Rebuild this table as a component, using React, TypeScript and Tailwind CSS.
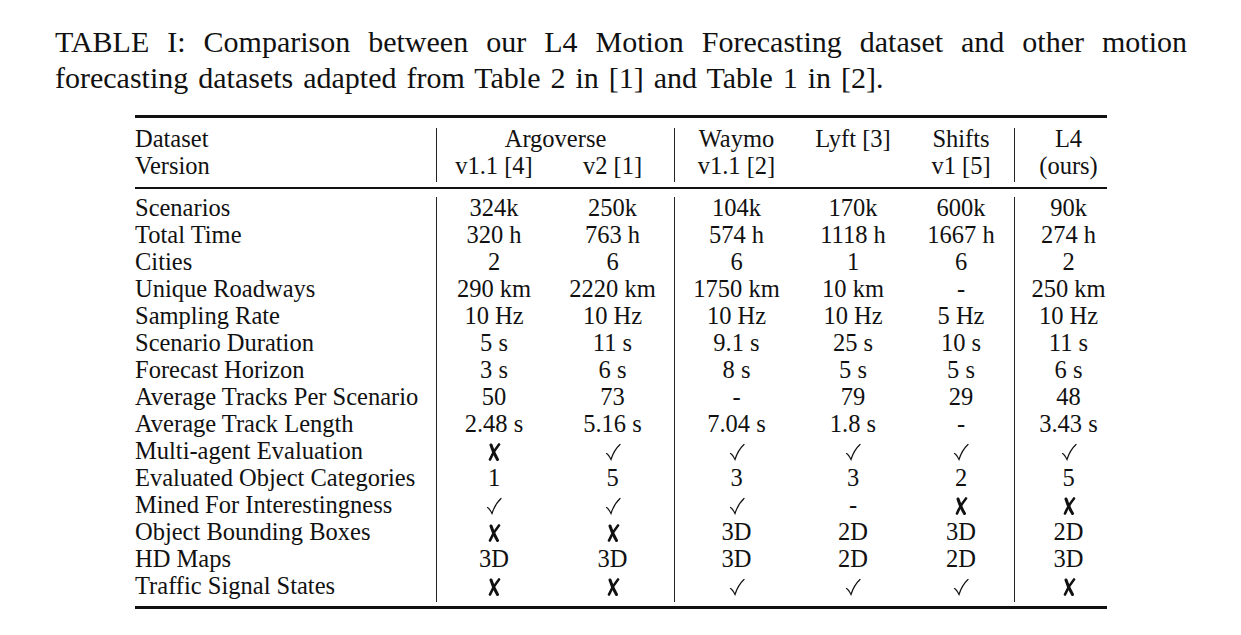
import React from "react";

const serif = { fontFamily: '"Liberation Serif", "Times New Roman", serif' };

const CHECK = "✓";
const CROSS = "✗";

const widths = ["w-[301px]", "w-[115px]", "w-[123px]", "w-[124px]", "w-[110px]", "w-[106px]", "w-[93px] pl-[15px]"];
const leftBorder = [false, true, false, true, false, false, true];

const rows: string[][] = [
  ["Scenarios", "324k", "250k", "104k", "170k", "600k", "90k"],
  ["Total Time", "320 h", "763 h", "574 h", "1118 h", "1667 h", "274 h"],
  ["Cities", "2", "6", "6", "1", "6", "2"],
  ["Unique Roadways", "290 km", "2220 km", "1750 km", "10 km", "-", "250 km"],
  ["Sampling Rate", "10 Hz", "10 Hz", "10 Hz", "10 Hz", "5 Hz", "10 Hz"],
  ["Scenario Duration", "5 s", "11 s", "9.1 s", "25 s", "10 s", "11 s"],
  ["Forecast Horizon", "3 s", "6 s", "8 s", "5 s", "5 s", "6 s"],
  ["Average Tracks Per Scenario", "50", "73", "-", "79", "29", "48"],
  ["Average Track Length", "2.48 s", "5.16 s", "7.04 s", "1.8 s", "-", "3.43 s"],
  ["Multi-agent Evaluation", CROSS, CHECK, CHECK, CHECK, CHECK, CHECK],
  ["Evaluated Object Categories", "1", "5", "3", "3", "2", "5"],
  ["Mined For Interestingness", CHECK, CHECK, CHECK, "-", CROSS, CROSS],
  ["Object Bounding Boxes", CROSS, CROSS, "3D", "2D", "3D", "2D"],
  ["HD Maps", "3D", "3D", "3D", "2D", "2D", "3D"],
  ["Traffic Signal States", CROSS, CROSS, CHECK, CHECK, CHECK, CROSS],
];

function Cell({ v }: { v: string }) {
  if (v === CHECK)
    return (
      <svg width="16" height="18" viewBox="0 0 16 18" className="inline-block mt-[3px]">
        <path d="M1.5 10.5 Q3.5 11.5 6 16.5 Q9 7 15 1.5" fill="none" stroke="#111" strokeWidth="1.2" strokeLinecap="round" />
      </svg>
    );
  if (v === CROSS)
    return (
      <svg width="14" height="18" viewBox="0 0 14 18" className="inline-block mt-[3px]">
        <path d="M4 2 Q6 9 10.5 16.5" fill="none" stroke="#111" strokeWidth="3" strokeLinecap="round" />
        <path d="M12 1.5 Q6.5 8 3 16.5" fill="none" stroke="#111" strokeWidth="2.6" strokeLinecap="round" />
      </svg>
    );
  return <>{v}</>;
}

function Row({ cells }: { cells: React.ReactNode[] }) {
  return (
    <div className="flex h-[27px] items-start leading-[21px]">
      {cells.map((c, i) => (
        <div
          key={i}
          className={`${widths[i]} h-full flex items-start whitespace-nowrap ${i === 0 ? "justify-start" : "justify-center"} ${leftBorder[i] ? "border-l border-[#222]" : ""}`}
        >
          {c}
        </div>
      ))}
    </div>
  );
}

export default function App() {
  return (
    <div className="w-[1241px] h-[635px] bg-white text-[#111] overflow-hidden" style={serif}>
      <div className="pl-[55px] pr-[54px] pt-[24px] text-[30px] leading-[36px] [word-spacing:2.5px]">
        <p className="text-justify [text-align-last:left]">
          TABLE I: Comparison between our L4 Motion Forecasting dataset and other motion forecasting datasets adapted from Table 2 in [1] and Table 1 in [2].
        </p>
      </div>
      <div className="ml-[135px] w-[972px] mt-[19px] text-[24.5px]">
        <div className="h-[3px] bg-[#111]" />
        <div className="pt-[10px] pb-[5px]">
          <div className="flex h-[27px] items-start leading-[21px]">
            <div className="w-[301px] h-full">Dataset</div>
            <div className="w-[238px] h-full flex justify-center border-l border-[#222]">Argoverse</div>
            <div className="w-[124px] h-full flex justify-center border-l border-[#222]">Waymo</div>
            <div className="w-[110px] h-full flex justify-center">Lyft [3]</div>
            <div className="w-[106px] h-full flex justify-center">Shifts</div>
            <div className="w-[93px] pl-[15px] h-full flex justify-center border-l border-[#222]">L4</div>
          </div>
          <Row cells={["Version", "v1.1 [4]", "v2 [1]", "v1.1 [2]", "", "v1 [5]", "(ours)"]} />
        </div>
        <div className="h-[2px] bg-[#111]" />
        <div className="pt-[8px] pb-[4px]">
          {rows.map((r, i) => (
            <Row key={i} cells={r.map((v, j) => <Cell key={j} v={v} />)} />
          ))}
        </div>
        <div className="h-[3px] bg-[#111]" />
      </div>
    </div>
  );
}
